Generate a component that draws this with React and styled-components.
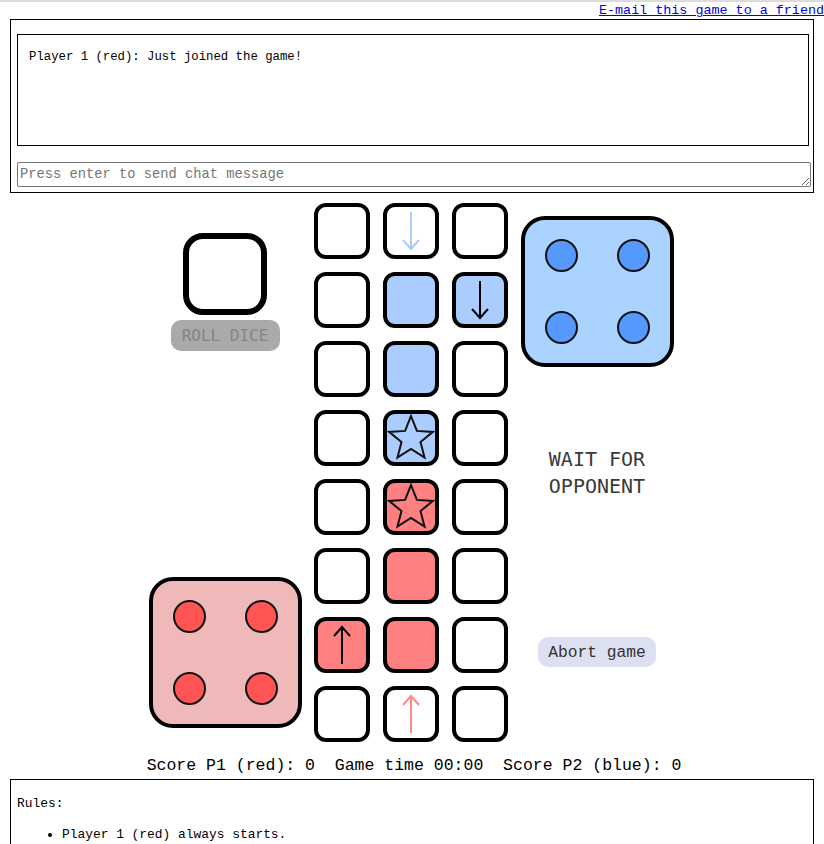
import React from 'react'
import styled, { createGlobalStyle } from 'styled-components'

const GlobalStyle = createGlobalStyle`
  html, body {
    margin: 0;
    padding: 0;
    background: #fff;
    font-family: "Liberation Mono", "DejaVu Sans Mono", monospace;
    color: #000;
  }
`

const Page = styled.div`
  border-top: 2px solid #dcdcdc;
  width: 824px;
`

const LinkRow = styled.div`
  height: 17px;
  text-align: right;
  font-size: 13.4px;
  line-height: 17px;

  a {
    color: #0000ee;
    text-decoration: underline;
  }
`

const ChatBox = styled.div`
  margin-left: 10px;
  width: 804px;
  box-sizing: border-box;
  border: 1px solid #000;
  padding: 14px 0 5px 6px;
`

const Messages = styled.div`
  box-sizing: border-box;
  width: 792px;
  height: 112px;
  border: 1px solid #000;
  padding: 15px 11px;
  font-size: 12.3px;
  line-height: 15px;
`

const ChatInput = styled.textarea`
  display: block;
  box-sizing: border-box;
  margin-top: 16px;
  width: 794px;
  height: 25px;
  border: 1px solid #767676;
  border-radius: 2px;
  padding: 3px 2px 1px;
  font-family: "Liberation Mono", monospace;
  font-size: 13.75px;
  line-height: 18px;
  resize: both;
  overflow: hidden;

  &::placeholder {
    color: #757575;
  }
`

const Game = styled.div`
  margin-top: 10px;
  display: grid;
  grid-template-columns: 160px 194px 160px;
  column-gap: 9px;
  justify-content: center;
  padding-right: 2px;
`

const Side = styled.div`
  display: flex;
  flex-direction: column;
  align-items: center;
`

const Board = styled.div`
  display: grid;
  grid-template-columns: repeat(3, 56px);
  grid-auto-rows: 56px;
  gap: 13px;
`

const Cell = styled.div`
  box-sizing: border-box;
  border: 4px solid #000;
  border-radius: 12px;
  background: ${p => p.$fill || '#fff'};
  display: flex;
  align-items: center;
  justify-content: center;
`

const EmptyDie = styled.div`
  box-sizing: border-box;
  margin-top: 30px;
  width: 84px;
  height: 82px;
  border: 6px solid #000;
  border-radius: 20px;
  background: #fff;
`

const RollButton = styled.div`
  margin-top: 5px;
  width: 109px;
  height: 31px;
  border-radius: 10px;
  background: #aaaaaa;
  color: #858585;
  font-family: "DejaVu Sans Mono", monospace;
  font-size: 16px;
  display: flex;
  align-items: center;
  justify-content: center;
`

const Die = styled.div`
  box-sizing: border-box;
  width: 153px;
  height: 151px;
  border: 4px solid #000;
  border-radius: 24px;
  background: ${p => p.$bg};
  display: grid;
  grid-template-columns: 33px 33px;
  grid-template-rows: 33px 33px;
  gap: 39px;
  justify-content: center;
  align-content: center;
  margin-top: ${p => p.$top || '0'};
  margin-bottom: ${p => p.$bottom || '0'};
`

const Dot = styled.div`
  box-sizing: border-box;
  width: 33px;
  height: 33px;
  border: 2px solid #111;
  border-radius: 50%;
  background: ${p => p.$color};
`

const Spacer = styled.div`
  flex: 1;
`

const Status = styled.div`
  margin-top: 79px;
  font-family: "DejaVu Sans Mono", monospace;
  font-size: 20px;
  line-height: 27px;
  color: #3a3a3a;
  text-align: center;
`

const AbortButton = styled.div`
  margin-top: 137px;
  width: 118px;
  height: 30px;
  border-radius: 10px;
  background: #dde0f0;
  color: #333;
  font-size: 16.3px;
  display: flex;
  align-items: center;
  justify-content: center;
`

const Score = styled.div`
  margin-top: 14px;
  height: 20px;
  line-height: 20px;
  text-align: center;
  font-size: 16.5px;
  white-space: pre;
  padding-left: 4px;
`

const Rules = styled.div`
  margin: 3px 0 0 10px;
  width: 804px;
  box-sizing: border-box;
  border: 1px solid #000;
  padding: 16px 6px 30px;
  font-size: 12.9px;
  line-height: 15px;

  ul {
    margin: 16px 0 0;
    padding-left: 45px;
  }
`

const Star = ({ fill }) => (
  <svg width="48" height="48" viewBox="0 0 48 48">
    <polygon
      points="24,2 29.88,16.91 45.87,17.89 33.51,28.09 37.52,43.61 24,35 10.48,43.61 14.49,28.09 2.13,17.89 18.12,16.91"
      fill={fill}
      stroke="#111"
      strokeWidth="2"
    />
  </svg>
)

const Arrow = ({ dir, color }) => (
  <svg width="20" height="40" viewBox="0 0 20 40">
    <g fill="none" stroke={color} strokeWidth="2" strokeLinecap="butt">
      <line x1="10" y1="1" x2="10" y2="39" />
      {dir === 'down'
        ? <polyline points="2,29 10,38 18,29" />
        : <polyline points="2,11 10,2 18,11" />}
    </g>
  </svg>
)

const BLUE = '#aaccff'
const RED = '#ff8080'

// board contents, top row first
const cells = [
  [null, { arrow: 'down', color: '#aaccff' }, null],
  [null, { fill: BLUE }, { fill: BLUE, arrow: 'down', color: '#000' }],
  [null, { fill: BLUE }, null],
  [null, { fill: BLUE, star: true }, null],
  [null, { fill: RED, star: true }, null],
  [null, { fill: RED }, null],
  [{ fill: RED, arrow: 'up', color: '#000' }, { fill: RED }, null],
  [null, { arrow: 'up', color: '#ff8888' }, null],
]

const Dice = ({ bg, dot, top, bottom }) => (
  <Die $bg={bg} $top={top} $bottom={bottom}>
    <Dot $color={dot} />
    <Dot $color={dot} />
    <Dot $color={dot} />
    <Dot $color={dot} />
  </Die>
)

export default function App() {
  return (
    <Page>
      <GlobalStyle />
      <LinkRow>
        <a href="#">E-mail this game to a friend</a>
      </LinkRow>
      <ChatBox>
        <Messages>Player 1 (red): Just joined the game!</Messages>
        <ChatInput rows={1} placeholder="Press enter to send chat message" />
      </ChatBox>

      <Game>
        <Side>
          <EmptyDie />
          <RollButton>ROLL DICE</RollButton>
          <Spacer />
          <Dice bg="#f0b9b9" dot="#ff5555" bottom="14px" />
        </Side>

        <Board>
          {cells.flat().map((c, i) => (
            <Cell key={i} $fill={c && c.fill}>
              {c && c.star && <Star fill={c.fill} />}
              {c && c.arrow && <Arrow dir={c.arrow} color={c.color} />}
            </Cell>
          ))}
        </Board>

        <Side>
          <Dice bg="#aad4ff" dot="#5599ff" top="13px" />
          <Status>WAIT FOR<br />OPPONENT</Status>
          <AbortButton>Abort game</AbortButton>
        </Side>
      </Game>

      <Score>{'Score P1 (red): 0  Game time 00:00  Score P2 (blue): 0'}</Score>

      <Rules>
        Rules:
        <ul>
          <li>Player 1 (red) always starts.</li>
        </ul>
      </Rules>
    </Page>
  )
}
